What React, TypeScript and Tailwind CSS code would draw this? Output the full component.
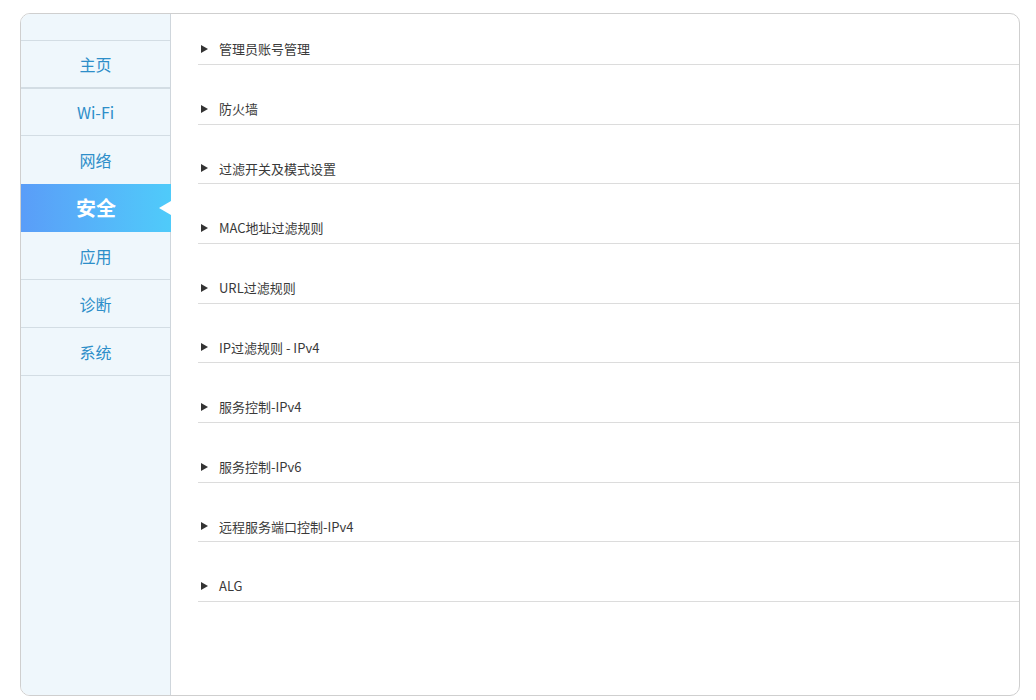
import React from "react";

const navItems = ["主页", "Wi-Fi", "网络", "安全", "应用", "诊断", "系统"];

const sections = [
  "管理员账号管理",
  "防火墙",
  "过滤开关及模式设置",
  "MAC地址过滤规则",
  "URL过滤规则",
  "IP过滤规则 - IPv4",
  "服务控制-IPv4",
  "服务控制-IPv6",
  "远程服务端口控制-IPv4",
  "ALG",
];

const font = { fontFamily: '"Microsoft YaHei", "Noto Sans CJK SC", sans-serif' };

export default function App() {
  const active = "安全";

  return (
    <div className="w-[1036px] h-[700px] bg-white pt-[13px] pl-[20px]" style={font}>
      <div className="flex w-[1000px] h-[683px] border border-[#cfcfcf] rounded-[10px] overflow-hidden">
        {/* 侧边栏 */}
        <aside className="w-[150px] shrink-0 bg-[#eff7fc] border-r border-[#cfd6dc]">
          <div className="h-[27px] border-b border-[#d3dde4]" />
          {navItems.map((item, i) => {
            const isActive = item === active;
            if (isActive) {
              return (
                <div
                  key={item}
                  className="relative h-[48px] -mr-px flex items-center justify-center bg-gradient-to-r from-[#5a9df8] to-[#4fcbfa] text-white text-[20px] font-bold"
                >
                  {item}
                  <span className="absolute right-0 top-1/2 -translate-y-1/2 w-0 h-0 border-y-[7px] border-y-transparent border-r-[12px] border-r-white" />
                </div>
              );
            }
            const beforeActive = navItems[i + 1] === active;
            const border = beforeActive
              ? ""
              : i === 0
                ? "border-b-2 border-[#d3dde4]"
                : "border-b border-[#d3dde4]";
            const height = i === 1 ? "h-[47px]" : "h-[48px]";
            return (
              <div
                key={item}
                className={`${height} flex items-center justify-center text-[16px] text-[#2d8ec9] ${border}`}
              >
                {item}
              </div>
            );
          })}
        </aside>

        {/* 内容 */}
        <main className="flex-1 pl-[27px] pt-[20px]">
          {sections.map((s, i) => (
            <div
              key={s}
              className={`flex items-center h-[31px] border-b border-[#dcdcdc] ${i === 0 ? "" : "mt-[28.67px]"}`}
            >
              <span className="ml-[3px] w-0 h-0 border-y-[4.5px] border-y-transparent border-l-[7px] border-l-[#333]" />
              <span className="ml-[11px] text-[13px] text-[#3a3a3a]">{s}</span>
            </div>
          ))}
        </main>
      </div>
    </div>
  );
}
